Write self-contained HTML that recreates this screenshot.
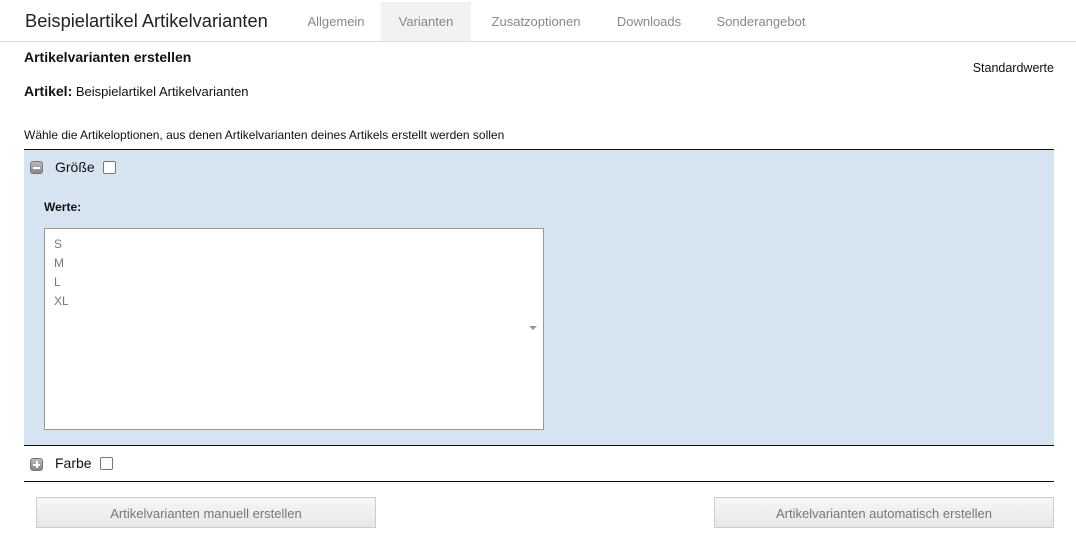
<!DOCTYPE html>
<html><head><meta charset="utf-8"><style>
*{margin:0;padding:0;box-sizing:border-box}
body{width:1076px;height:541px;background:#fff;font-family:"Liberation Sans",sans-serif;color:#111;position:relative;overflow:hidden}
.abs{position:absolute;white-space:nowrap}
.tab{position:absolute;top:2px;height:39px;line-height:39px;font-size:13px;color:#888;text-align:center}
.ico{position:absolute;width:13px;height:13px;border-radius:3px;background:linear-gradient(#bbb,#888);border:1px solid #777}
.ico:after{content:"";position:absolute;left:2px;top:5px;width:7px;height:2px;background:#fff}
.plus:before{content:"";position:absolute;left:4.5px;top:2px;width:2px;height:7px;background:#fff}
.cb{position:absolute;width:13px;height:13px;border:1.5px solid #777;background:#fff;border-radius:2px}
.btn{position:absolute;top:497px;height:31px;border:1px solid #ccc;background:linear-gradient(#f6f6f6,#e8e8e8);color:#777;font-size:13px;text-align:center;line-height:31px}
</style></head><body>
<div class="abs" style="left:25px;top:10px;font-size:18.3px;color:#222">Beispielartikel Artikelvarianten</div>
<div class="tab" style="left:292px;width:88px">Allgemein</div>
<div class="tab" style="left:381px;width:90px;background:#f2f2f2">Varianten</div>
<div class="tab" style="left:480px;width:112px">Zusatzoptionen</div>
<div class="tab" style="left:605px;width:88px">Downloads</div>
<div class="tab" style="left:710px;width:102px">Sonderangebot</div>
<div class="abs" style="left:0;top:41px;width:1076px;height:1px;background:#ddd"></div>
<div class="abs" style="left:24px;top:49px;font-size:14px;font-weight:bold">Artikelvarianten erstellen</div>
<div class="abs" style="right:22px;top:61px;font-size:12.5px">Standardwerte</div>
<div class="abs" style="left:24px;top:83px;font-size:13px"><b style="font-size:14px">Artikel:</b> Beispielartikel Artikelvarianten</div>
<div class="abs" style="left:24px;top:128px;font-size:12px">Wähle die Artikeloptionen, aus denen Artikelvarianten deines Artikels erstellt werden sollen</div>
<div class="abs" style="left:24px;top:149px;width:1030px;height:297px;background:#d6e4f1;border-top:1px solid #111;border-bottom:1px solid #111"></div>
<div class="ico" style="left:30px;top:161px"></div>
<div class="abs" style="left:55px;top:159px;font-size:14px">Größe</div>
<div class="cb" style="left:103px;top:161px"></div>
<div class="abs" style="left:44px;top:200px;font-size:12px;font-weight:bold">Werte:</div>
<div class="abs" style="left:44px;top:228px;width:500px;height:202px;background:#fff;border:1px solid #999"></div>
<div class="abs" style="left:54px;top:235px;font-size:12px;color:#777;line-height:19px">S<br>M<br>L<br>XL</div>
<div class="abs" style="left:529px;top:326px;width:0;height:0;border-left:4px solid transparent;border-right:4px solid transparent;border-top:4px solid #999"></div>
<div class="ico plus" style="left:30px;top:458px"></div>
<div class="abs" style="left:55px;top:455px;font-size:14px">Farbe</div>
<div class="cb" style="left:100px;top:457px"></div>
<div class="abs" style="left:24px;top:481px;width:1030px;height:1px;background:#111"></div>
<div class="btn" style="left:36px;width:340px">Artikelvarianten manuell erstellen</div>
<div class="btn" style="left:714px;width:340px">Artikelvarianten automatisch erstellen</div>
</body></html>
